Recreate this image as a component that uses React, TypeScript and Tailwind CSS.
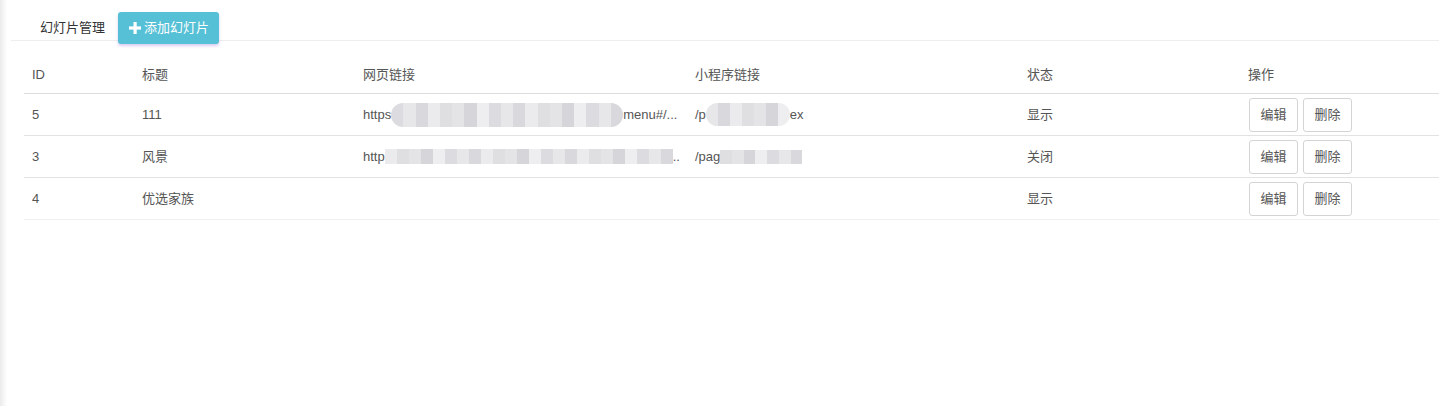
import React from "react";

const FONT = "font-['Liberation_Sans','Noto_Sans_CJK_SC',sans-serif]";

const SHADES = [
  "bg-[#e4e4e7]",
  "bg-[#dcdce0]",
  "bg-[#ebebed]",
  "bg-[#d6d6da]",
  "bg-[#e7e7e9]",
  "bg-[#dfdfe2]",
  "bg-[#eeeef0]",
  "bg-[#d9d9dd]",
];

// pixelated blur standing in for hidden link text
const Mosaic: React.FC<{ cells: number; w: string; h: string; seed: number; round?: boolean }> = ({ cells, w, h, seed, round }) => (
  <span className={`inline-flex shrink-0 overflow-hidden blur-[0.6px] ${w} ${h} ${round ? "rounded-full" : ""}`}>
    {Array.from({ length: cells }).map((_, i) => (
      <span key={i} className={`h-full flex-1 ${SHADES[(i * 3 + seed) % SHADES.length]}`} />
    ))}
  </span>
);

type Row = {
  id: string;
  title: string;
  web: React.ReactNode;
  mini: React.ReactNode;
  status: string;
};

const ROWS: Row[] = [
  {
    id: "5",
    title: "111",
    web: (
      <>
        <span>https</span>
        <Mosaic cells={19} w="w-[232px]" h="h-[24px]" seed={1} round />
        <span>menu#/...</span>
      </>
    ),
    mini: (
      <>
        <span>/p</span>
        <Mosaic cells={7} w="w-[84px]" h="h-[23px]" seed={4} round />
        <span>ex</span>
      </>
    ),
    status: "显示",
  },
  {
    id: "3",
    title: "风景",
    web: (
      <>
        <span>http</span>
        <Mosaic cells={24} w="w-[288px]" h="h-[15px]" seed={2} />
        <span>..</span>
      </>
    ),
    mini: (
      <>
        <span>/pag</span>
        <Mosaic cells={7} w="w-[82px]" h="h-[14px]" seed={5} />
      </>
    ),
    status: "关闭",
  },
  { id: "4", title: "优选家族", web: null, mini: null, status: "显示" },
];

const GRID = "grid grid-cols-[110px_221px_332px_332px_221px_1fr]";

const ActionButton: React.FC<{ label: string }> = ({ label }) => (
  <button className="h-[34px] w-[49px] rounded-[3px] border border-[#d4d4d4] bg-white text-[13px] text-[#555]">
    {label}
  </button>
);

export default function App() {
  return (
    <div className={`flex h-[406px] w-full bg-white text-[13px] text-[#555] ${FONT}`}>
      <div className="w-[7px] shrink-0 bg-gradient-to-r from-[#ebebeb] to-white" />
      <div className="flex-1 pl-[4px]">
        {/* tabs */}
        <div className="flex h-[41px] items-start border-b border-[#eeeeee]">
          <span className="ml-[29px] mt-[19px] leading-[18px] text-[#333]">幻灯片管理</span>
          <button className="relative z-10 ml-[13px] mt-[12px] flex h-[32px] w-[101px] items-center gap-[3px] rounded-[3px] bg-[#56c0d6] pl-[11px] text-white shadow-[0_2px_3px_rgba(130,90,210,0.3)]">
            <svg width="12" height="12" viewBox="0 0 12 12">
              <rect x="4.5" y="0" width="3.2" height="12" fill="#fff" />
              <rect x="0" y="4.4" width="12" height="3.2" fill="#fff" />
            </svg>
            <span className="leading-[18px]">添加幻灯片</span>
          </button>
        </div>

        {/* table */}
        <div className="ml-[13px] mt-[16px]">
          <div className={`${GRID} h-[37px] items-center border-b border-[#dddddd]`}>
            <span className="pl-[8px]">ID</span>
            <span className="pl-[8px]">标题</span>
            <span className="pl-[8px]">网页链接</span>
            <span className="pl-[8px]">小程序链接</span>
            <span className="pl-[8px]">状态</span>
            <span className="pl-[8px]">操作</span>
          </div>
          {ROWS.map((r, i) => (
            <div
              key={r.id}
              className={`${GRID} h-[42px] items-center border-b ${i === 2 ? "border-[#f0f0f0]" : "border-[#e2e2e2]"}`}
            >
              <span className="pl-[8px]">{r.id}</span>
              <span className="pl-[8px]">{r.title}</span>
              <span className="flex items-center pl-[8px] whitespace-nowrap">{r.web}</span>
              <span className="flex items-center pl-[8px] whitespace-nowrap">{r.mini}</span>
              <span className="pl-[8px]">{r.status}</span>
              <span className="flex gap-[5px] pl-[9px]">
                <ActionButton label="编辑" />
                <ActionButton label="删除" />
              </span>
            </div>
          ))}
        </div>
      </div>
    </div>
  );
}
